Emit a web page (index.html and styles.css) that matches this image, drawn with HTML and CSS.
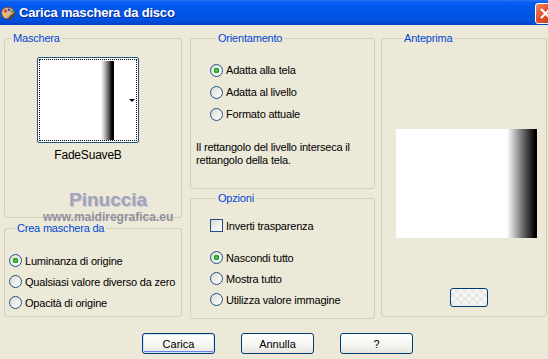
FILE: index.html
```html
<!DOCTYPE html>
<html lang="it">
<head>
    <meta charset="UTF-8">
    <meta name="viewport" content="width=device-width, initial-scale=1.0">
    <title>Carica maschera da disco</title>
    <link rel="stylesheet" href="styles.css">
</head>
<body>
    <div class="window">
        <header class="titlebar">
            <svg class="app-icon" width="15" height="15" viewBox="0 0 15 15">
                <path d="M2 3 C5 0 12 1 13 5 C14 9 10 8 9 10 C8 13 4 14 2 11 C0 8 0 5 2 3 Z" fill="#d9b58a" stroke="#7a4a22" stroke-width="1"/>
                <circle cx="4.5" cy="5" r="1.4" fill="#e03020"/>
                <circle cx="8" cy="3.8" r="1.3" fill="#2050e0"/>
                <circle cx="11" cy="5.5" r="1.2" fill="#30a030"/>
                <circle cx="4" cy="9" r="1.3" fill="#f0d020"/>
                <path d="M9 14 L14 7" stroke="#6a3a12" stroke-width="1.6"/>
            </svg>
            <span class="title">Carica maschera da disco</span>
            <span class="close">
                <svg width="21" height="21" viewBox="0 0 21 21">
                    <path d="M6 6 L15 15 M15 6 L6 15" stroke="#fff" stroke-width="2.2"/>
                </svg>
            </span>
        </header>

        <main class="content">
            <div class="columns">
                <div class="col col-left">
                    <fieldset class="group group-mask">
                        <legend>Maschera</legend>
                        <div class="thumb">
                            <div class="thumb-focus">
                                <div class="thumb-img"></div>
                            </div>
                            <span class="thumb-arrow"></span>
                        </div>
                        <div class="thumb-name">FadeSuaveB</div>
                    </fieldset>
                    <fieldset class="group group-source">
                        <legend>Crea maschera da</legend>
                        <label class="opt"><span class="radio on"></span>Luminanza di origine</label>
                        <label class="opt"><span class="radio"></span>Qualsiasi valore diverso da zero</label>
                        <label class="opt"><span class="radio"></span>Opacità di origine</label>
                    </fieldset>
                    <div class="watermark">
                        <span class="wm-name">Pinuccia</span>
                        <span class="wm-site">www.maidiregrafica.eu</span>
                    </div>
                </div>

                <div class="col col-mid">
                    <fieldset class="group group-orient">
                        <legend>Orientamento</legend>
                        <label class="opt"><span class="radio on"></span>Adatta alla tela</label>
                        <label class="opt"><span class="radio"></span>Adatta al livello</label>
                        <label class="opt"><span class="radio"></span>Formato attuale</label>
                        <p class="note">Il rettangolo del livello interseca il rettangolo della tela.</p>
                    </fieldset>
                    <fieldset class="group group-options">
                        <legend>Opzioni</legend>
                        <label class="opt opt-check"><span class="check"></span>Inverti trasparenza</label>
                        <label class="opt"><span class="radio on"></span>Nascondi tutto</label>
                        <label class="opt"><span class="radio"></span>Mostra tutto</label>
                        <label class="opt"><span class="radio"></span>Utilizza valore immagine</label>
                    </fieldset>
                </div>

                <div class="col col-right">
                    <fieldset class="group group-preview">
                        <legend>Anteprima</legend>
                        <div class="preview"></div>
                        <button class="btn btn-bg"></button>
                    </fieldset>
                </div>
            </div>

            <div class="actions">
                <button class="btn btn-default">Carica</button>
                <button class="btn">Annulla</button>
                <button class="btn">?</button>
            </div>
        </main>
    </div>
</body>
</html>
```

FILE: styles.css
```css
body {
    margin: 0;
    width: 548px;
    height: 359px;
    overflow: hidden;
    background-color: #ece9d8;
    font-family: "Liberation Sans", Arial, sans-serif;
    font-size: 11px;
    letter-spacing: -0.2px;
    color: #000;
}
.window {
    width: 548px;
}
.titlebar {
    height: 25px;
    display: flex;
    align-items: center;
    background: linear-gradient(#2a74f2 0, #0a5ff0 2px, #0058ee 6px, #0055e5 14px, #0050dc 21px, #0042c4 25px);
    color: #fff;
}
.app-icon {
    margin-left: 1px;
    margin-top: 1px;
}
.title {
    margin-left: 3px;
    font-size: 13px;
    font-weight: bold;
    text-shadow: 1px 1px 0 #0a2a9a;
}
.close {
    margin-left: auto;
    margin-right: -8px;
    margin-top: 1px;
    width: 21px;
    height: 21px;
    box-sizing: border-box;
    border: 1px solid #fff;
    border-radius: 3px;
    background: linear-gradient(135deg, #f08a6a, #e0502c 45%, #c83b1a);
}
.close svg {
    display: block;
    margin: -1px;
}
.content {
    padding: 7px 0 0 4px;
}
.columns {
    display: flex;
    gap: 8px;
}
.col {
    display: flex;
    flex-direction: column;
}
.col-left {
    width: 178px;
    position: relative;
}
.col-mid {
    width: 185px;
    gap: 3px;
}
.col-right {
    width: 166px;
    margin-left: -2px;
}

/* group boxes */
.group {
    margin: 0;
    padding: 0;
    border: 1px solid #d0d0bf;
    border-radius: 3px;
    min-width: 0;
}
.group legend {
    margin-left: 6px;
    padding: 0 2px;
    color: #0046d5;
    line-height: 13px;
}
.group-mask {
    height: 186px;
    box-sizing: border-box;
    display: flex;
    flex-direction: column;
    align-items: center;
    padding: 12px 10px 0 0;
}
.group-source {
    margin-top: 4px;
    height: 95px;
    box-sizing: border-box;
    padding: 15px 0 0 4px;
}
.group-orient {
    height: 157px;
    box-sizing: border-box;
    padding: 14px 0 0 19px;
}
.group-options {
    height: 127px;
    box-sizing: border-box;
    padding: 10px 0 0 19px;
}
.group-preview {
    height: 285px;
    box-sizing: border-box;
    display: flex;
    flex-direction: column;
    align-items: flex-start;
    padding: 84px 0 0 14px;
}

/* mask thumbnail */
.thumb {
    width: 102px;
    height: 86px;
    box-sizing: border-box;
    border: 1px solid #1c5180;
    border-radius: 2px;
    background: #fff;
    padding: 1px;
    position: relative;
}
.thumb-focus {
    height: 100%;
    box-sizing: border-box;
    border: 1px dotted #000;
    padding: 1px 0 0 1px;
}
.thumb-img {
    height: 100%;
    background: linear-gradient(to right, #fff 0, #fff 60px, #c8c8c8 63px, #707070 67px, #000 71px, #000 73px, #fff 73px);
}
.thumb-arrow {
    position: absolute;
    right: 3px;
    top: 41px;
    border-left: 3px solid transparent;
    border-right: 3px solid transparent;
    border-top: 3px solid #000;
}
.thumb-name {
    margin-top: 6px;
    line-height: 13px;
    font-size: 12px;
}

/* watermark */
.watermark {
    position: absolute;
    left: 39px;
    top: 157px;
    display: flex;
    flex-direction: column;
    align-items: center;
    pointer-events: none;
    letter-spacing: 0;
}
.wm-name {
    font-size: 19px;
    font-weight: bold;
    color: #a2a3b8;
    line-height: 22px;
    text-shadow: 1px 1px 0 #c8c8d4;
}
.wm-site {
    font-size: 12px;
    font-weight: bold;
    color: #8f8f9f;
    line-height: 13px;
}

/* options */
.opt {
    display: flex;
    align-items: center;
    gap: 3px;
    height: 22px;
    white-space: nowrap;
}
.group-options .opt,
.group-source .opt {
    height: 21px;
}
.opt-check {
    margin-bottom: 11px;
}
.radio {
    width: 13px;
    height: 13px;
    box-sizing: border-box;
    border: 1px solid #1c5180;
    border-radius: 50%;
    background: linear-gradient(135deg, #dcdcd4, #fff);
    flex: none;
}
.radio.on {
    background: radial-gradient(circle, #5ed45e 0, #21a121 2px, #21a121 2.6px, transparent 3px), linear-gradient(135deg, #dcdcd4, #fff);
}
.check {
    width: 13px;
    height: 13px;
    box-sizing: border-box;
    border: 1px solid #1c5180;
    background: linear-gradient(135deg, #dcdcd4, #fff);
    flex: none;
}
.note {
    margin: 16px 0 0 -14px;
    line-height: 13px;
    width: 165px;
}

/* preview */
.preview {
    width: 141px;
    height: 109px;
    background: linear-gradient(to right, #fff 0, #fff 111px, #c0c0c0 118px, #606060 128px, #000 139px);
}
.btn {
    font-family: inherit;
    font-size: 11px;
    color: #000;
    border: 1px solid #003c74;
    border-radius: 3px;
    background: linear-gradient(#fff, #f4f4f0 60%, #e6e5de);
    padding: 0;
}
.btn-bg {
    margin: 50px 0 0 54px;
    width: 38px;
    height: 19px;
    background:
        linear-gradient(45deg, #e8e8e4 25%, transparent 25%, transparent 75%, #e8e8e4 75%),
        linear-gradient(45deg, #e8e8e4 25%, #f6f6f4 25%, #f6f6f4 75%, #e8e8e4 75%);
    background-size: 8px 8px;
    background-position: 0 0, 4px 4px;
}

/* bottom buttons */
.actions {
    display: flex;
    gap: 26px;
    padding: 14px 0 0 138px;
}
.actions .btn {
    width: 73px;
    height: 21px;
}
.btn-default {
    box-shadow: inset 0 0 0 1px #cee7ff, inset 0 -1px 0 1px #6982ee;
}
```
